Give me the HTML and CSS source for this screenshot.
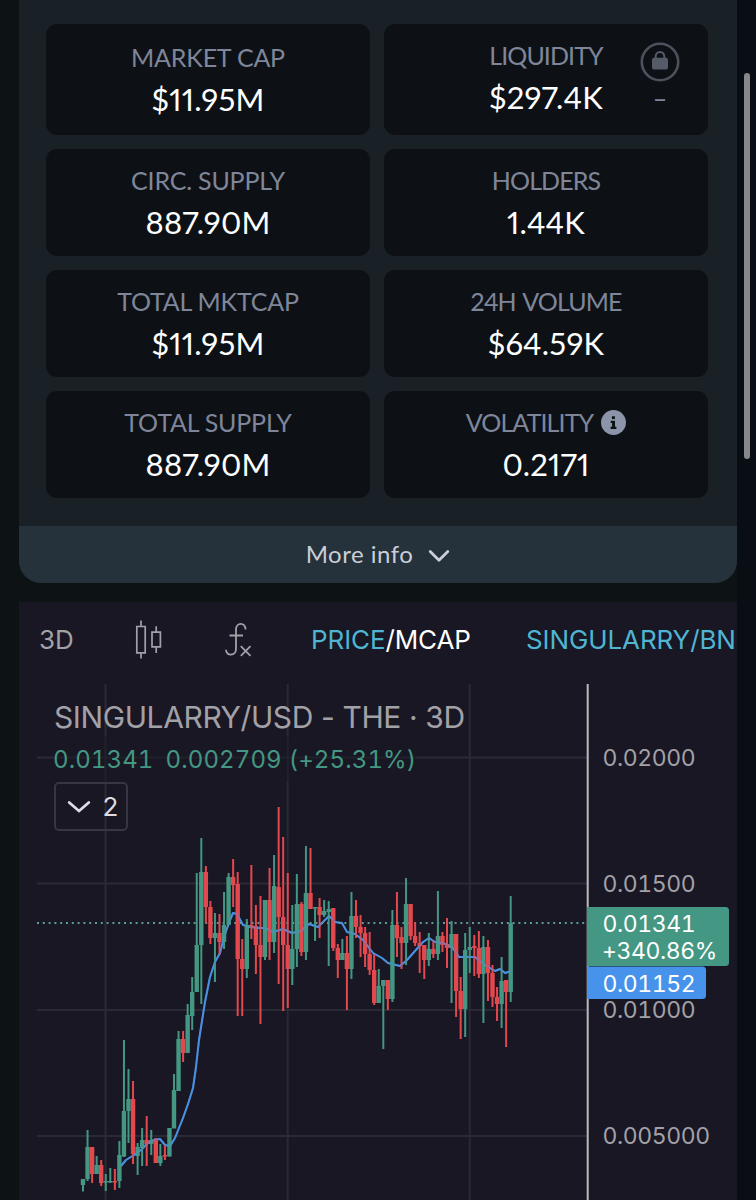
FILE: index.html
```html
<!DOCTYPE html>
<html lang="en">

<head>
    <meta charset="UTF-8">
    <meta name="viewport" content="width=device-width, initial-scale=1.0">
    <title>SINGULARRY/USD</title>

    <link rel="stylesheet" href="styles.css">
</head>

<body>

    <section class="info">
        <div class="stats">
            <div class="stat stat-first">
                <h5>MARKET CAP</h5>
                <p>$11.95M</p>
            </div>
            <div class="stat stat-first stat-liquidity">
                <h5>LIQUIDITY</h5>
                <p>$297.4K</p>
                <div class="lock">
                    <svg width="40" height="40" viewBox="0 0 40 40">
                        <circle cx="20" cy="20" r="18.2" fill="none" stroke="#4c525d" stroke-width="2.6"/>
                        <path d="M15.7 17v-2.700a4.300 4.300 0 0 1 8.600 0V17" fill="none" stroke="#555b68" stroke-width="2"/>
                        <rect x="12" y="15.700" width="16" height="11.800" rx="2" fill="#555b68"/>
                    </svg>
                    <span>–</span>
                </div>
            </div>
            <div class="stat">
                <h5>CIRC. SUPPLY</h5>
                <p>887.90M</p>
            </div>
            <div class="stat">
                <h5>HOLDERS</h5>
                <p>1.44K</p>
            </div>
            <div class="stat">
                <h5>TOTAL MKTCAP</h5>
                <p>$11.95M</p>
            </div>
            <div class="stat">
                <h5>24H VOLUME</h5>
                <p>$64.59K</p>
            </div>
            <div class="stat">
                <h5>TOTAL SUPPLY</h5>
                <p>887.90M</p>
            </div>
            <div class="stat">
                <h5>VOLATILITY
                    <svg width="25" height="25" viewBox="0 0 25 25">
                        <circle cx="12.500" cy="12.500" r="12.500" fill="#8c94a9"/>
                        <path d="M10.900 6.200h3v2.900h-3zM9.700 10.700h4.300v6h1.400v2.200H9.600v-2.200h1.500v-3.800H9.700z" fill="#0d1115"/>
                    </svg>
                </h5>
                <p>0.2171</p>
            </div>
        </div>
        <div class="more">
            <span>More info</span>
            <svg width="22" height="14" viewBox="0 0 22 14">
                <path d="M2.200 2.500L11 11.300l8.800-8.800" fill="none" stroke="#c9ced8" stroke-width="2.800" stroke-linecap="round" stroke-linejoin="round"/>
            </svg>
        </div>
    </section>

    <section class="chart">
        <div class="toolbar">
            <span class="interval">3D</span>
            <svg class="icon-candles" width="30" height="40" viewBox="0 0 30 40" fill="none" stroke="#a3a1a8" stroke-width="1.700">
                <path d="M2.800 6.500h8.400v26.300H2.800zM7 .5v6M7 32.800v5.700M18 12.200h8.400v14.600H18zM22.200 6.300v5.900M22.200 26.800v6.100"/>
            </svg>
            <svg class="icon-fx" width="28" height="36" viewBox="0 0 28 36" fill="none" stroke="#a3a1a8" stroke-width="1.800">
                <path d="M21.500 7.500C21.500 -.2 12 .2 12 7.500V27c0 7.300-10 7.500-10 .7M5.500 13.500h13.500M16.800 24.200l9.700 9.700M26.500 24.200l-9.700 9.700"/>
            </svg>
            <span class="switch"><b>PRICE</b>/MCAP</span>
            <span class="pair">SINGULARRY/BN</span>
        </div>

        <div class="plot">
            <svg id="grafico" width="718" height="516" viewBox="19 684 718 516">
                <g class="grid">
                    <path d="M37 757.500H587M37 883.500H587M37 1010H587M37 1136H587M105.500 684V1200M287.700 684V1200M469.700 684V1200"/>
                </g>
                <polyline class="average"/>
                <path class="last" d="M37 923H587"/>
                <g id="candles"></g>
                <polyline class="average over"/>
                <path class="axis" d="M587.700 684V1200"/>
                <g class="prices">
                    <text x="602.500" y="765.500">0.02000</text>
                    <text x="602.500" y="891.500">0.01500</text>
                    <text x="602.500" y="1018">0.01000</text>
                    <text x="602.500" y="1144">0.005000</text>
                </g>
                <path d="M587 907h138.500a3.500 3.500 0 0 1 3.500 3.500v52a3.500 3.500 0 0 1-3.500 3.500H587z" fill="#449782"/>
                <path d="M587 966.500h115.500a3.500 3.500 0 0 1 3.500 3.500v25.500a3.500 3.500 0 0 1-3.500 3.500H587z" fill="#4793ec"/>
                <g class="prices tags">
                    <text x="602.500" y="932">0.01341</text>
                    <text x="602" y="959">+340.86%</text>
                    <text x="602.500" y="991.500">0.01152</text>
                </g>
            </svg>

            <div class="legend">
                <h1>SINGULARRY/USD - THE · 3D</h1>
                <p><span>0.01341</span><span>0.002709</span><span>(+25.31%)</span></p>
                <div class="indicators">
                    <svg width="24" height="14" viewBox="0 0 24 14">
                        <path d="M2.200 2.500L12 11l9.800-8.500" fill="none" stroke="#dcdce2" stroke-width="2.800" stroke-linecap="round"/>
                    </svg>
                    2
                </div>
            </div>
        </div>
    </section>

    <div class="scroll"></div>

    <script src="chart.js"></script>

</body>

</html>
```

FILE: styles.css
```css
* {
    padding: 0;
    margin: 0;
    box-sizing: border-box;
}

body {
    background: linear-gradient(to right, #0d1215 737px, #090d14 737px);
    width: 756px;
    height: 1200px;
    overflow: hidden;
    font-family: Lato, sans-serif;
}

.info {
    width: 718px;
    height: 583px;
    margin-left: 19px;
    background-color: #192127;
    border-radius: 0 0 22px 22px;
    overflow: hidden;
    display: flex;
    flex-direction: column;
}

.stats {
    height: 526px;
    padding: 24px 29px 0 27px;
    display: grid;
    grid-template-columns: 1fr 1fr;
    grid-template-rows: 111px 107px 107px 107px;
    gap: 14px;
}

.stat {
    position: relative;
    background-color: #0d1115;
    border-radius: 11px;
    padding-top: 13px;
    display: flex;
    flex-direction: column;
    align-items: center;
}

.stat-first {
    padding-top: 15px;
}

.stat h5 {
    height: 36px;
    display: flex;
    align-items: center;
    gap: 8px;
    color: #7f869a;
    font-size: 25px;
    font-weight: normal;
    letter-spacing: -0.2px;
}

.stat:nth-child(even) h5 {
    letter-spacing: -0.9px;
    word-spacing: 2px;
}

.stat p {
    line-height: 48px;
    color: #fff;
    font-size: 31px;
    letter-spacing: 0.2px;
    font-variant-numeric: proportional-nums;
}

.stat-liquidity {
    padding-top: 13px;
}

.lock {
    position: absolute;
    top: 18px;
    right: 28px;
    width: 40px;
    display: flex;
    flex-direction: column;
    align-items: center;
    color: #7f869a;
    font-size: 25px;
    line-height: 32px;
}

.more {
    height: 57px;
    padding-bottom: 2px;
    background-color: #25313b;
    display: flex;
    align-items: center;
    justify-content: center;
    gap: 15px;
    color: #c9ced8;
    font-size: 24px;
    letter-spacing: 0.5px;
}

.more svg {
    margin-top: 4px;
}

.chart {
    width: 718px;
    height: 598px;
    margin: 19px 0 0 19px;
    background-color: #181723;
    overflow: hidden;
    font-family: Inter, sans-serif;
}

.toolbar {
    height: 82px;
    padding: 0 0 7px 20px;
    display: flex;
    align-items: center;
    color: #fff;
    font-size: 26px;
    white-space: nowrap;
}

.toolbar > * {
    flex-shrink: 0;
}

.interval {
    width: 95px;
    color: #a3a1a8;
}

.icon-candles {
    margin-right: 60px;
}

.icon-fx {
    margin-right: 59px;
}

.switch {
    width: 215px;
    letter-spacing: -0.1px;
}

.switch b {
    color: #4fb5d3;
    font-weight: normal;
}

.pair {
    color: #4fb5d3;
    letter-spacing: -0.1px;
}

.plot {
    position: relative;
}

.plot > svg {
    display: block;
}

.grid path {
    stroke: #2a2a35;
    stroke-width: 2;
}

.axis {
    stroke: #b9b9be;
    stroke-width: 2;
}

.average {
    fill: none;
    stroke: #4a90e2;
    stroke-width: 2;
    stroke-linejoin: round;
}

.over {
    opacity: 0.4;
}

.last {
    stroke: #5d9d90;
    stroke-width: 2;
    stroke-dasharray: 2 3.8;
}

.up {
    fill: #449782;
}

.down {
    fill: #e4484f;
}

.prices {
    fill: #a3a1a8;
    font-size: 23px;
    letter-spacing: -0.4px;
    font-variant-numeric: tabular-nums;
}

.tags {
    fill: #fff;
}

.legend {
    position: absolute;
    top: 14px;
    left: 34px;
    color: #a3a1a8;
}

.legend h1 {
    margin-left: 1px;
    line-height: 38px;
    font-size: 30px;
    font-weight: normal;
    letter-spacing: -0.4px;
}

.legend p {
    display: flex;
    gap: 12px;
    width: max-content;
    height: 46px;
    line-height: 48px;
    color: #449782;
    font-size: 24px;
    letter-spacing: 0.1px;
    font-variant-numeric: tabular-nums;
    background-color: rgba(24, 23, 35, 0.5);
}

.legend p span:last-child {
    margin-left: -5px;
}

.indicators {
    width: 74px;
    height: 49px;
    margin-left: 1px;
    padding-left: 3px;
    border: 2px solid #373642;
    border-radius: 5px;
    display: flex;
    align-items: center;
    justify-content: center;
    gap: 12px;
    color: #dcdce2;
    font-size: 26px;
}

.scroll {
    position: absolute;
    top: 73px;
    left: 744px;
    width: 6px;
    height: 386px;
    border-radius: 3px;
    background-color: #87888a;
}
```

FILE: chart.js
```js
// [up, high, low, body top, body bottom]
var candles = [
    [1, 1179, 1191.5, 1179, 1185], [1, 1130, 1181, 1147, 1179], [0, 1147, 1183, 1147, 1174],
    [1, 1156, 1174, 1165, 1174], [0, 1160, 1186, 1165, 1183], [1, 1174, 1191, 1181, 1182.5],
    [1, 1168, 1183, 1181, 1182.5], [0, 1169, 1190, 1181, 1182.5], [1, 1141, 1188, 1155, 1181],
    [1, 1040, 1157, 1111, 1156.5], [1, 1069, 1143, 1099, 1111], [0, 1081, 1164, 1099, 1154],
    [1, 1143, 1175, 1147, 1156], [1, 1128, 1166, 1140, 1148], [0, 1116, 1166, 1140, 1144],
    [1, 1130, 1155, 1140, 1144], [0, 1138, 1163, 1139, 1163], [1, 1144, 1166, 1156, 1163],
    [0, 1145, 1160, 1155, 1156.5], [1, 1128, 1156.5, 1128, 1156.5], [1, 1074, 1128, 1090, 1128.5],
    [1, 1031, 1091, 1039, 1091], [0, 1031, 1062, 1039, 1053], [1, 1004, 1053, 1015, 1053],
    [1, 977, 1030, 992, 1016], [1, 873, 992, 945, 992], [1, 838, 1004, 872, 945],
    [0, 866, 923, 872, 907], [0, 901, 944, 907, 938], [1, 913, 982, 933, 938],
    [0, 914, 955, 933, 942], [1, 892, 949, 925, 942], [1, 873, 925, 877, 925],
    [0, 859, 907, 877, 885], [0, 872, 1016, 884, 959], [0, 939, 1016, 959, 969],
    [1, 919, 978, 925, 969], [0, 865, 939, 925, 928], [0, 905, 974, 926, 945],
    [0, 896, 1024, 945, 957], [1, 900, 960, 900, 957], [0, 868, 960, 900, 942],
    [1, 855, 953, 886, 942], [0, 807, 984, 887, 917], [0, 837, 1011, 917, 945],
    [0, 873, 1008, 945, 969], [1, 905, 985, 949, 969], [1, 874, 967, 904, 949],
    [0, 902, 956, 904, 952], [1, 846, 960, 893, 952], [0, 848, 909, 893, 909],
    [1, 907, 941, 907, 908.5], [0, 898, 938, 907, 915], [1, 900, 917, 911, 915],
    [1, 901, 966, 909, 912], [0, 908, 951, 908, 948], [0, 944, 978, 948, 960],
    [1, 939, 960, 953, 960], [0, 936, 1010, 953, 969], [1, 892, 979, 916, 969],
    [0, 900, 938, 916, 927], [0, 915, 957, 927, 933], [0, 927, 967, 933, 954],
    [0, 932, 975, 954, 970], [0, 954, 1005, 970, 1003], [1, 969, 1003, 986, 1003],
    [1, 980, 1049, 980, 986], [0, 980, 1010, 980, 999], [1, 910, 1002, 925, 999],
    [0, 892, 957, 925, 938], [0, 927, 969, 937, 943], [1, 878, 965, 904, 943],
    [0, 904, 940, 904, 936], [0, 922, 946, 936, 943], [0, 932, 973, 943, 946],
    [0, 945, 979, 945, 960], [1, 933, 966, 949, 960], [0, 940, 958, 949, 954],
    [1, 891, 960, 936, 954], [0, 932, 952, 936, 945], [0, 918, 968, 944, 948],
    [1, 921, 1003, 934, 948], [0, 934, 1017, 934, 991], [0, 977, 1039, 991, 1009],
    [1, 933, 1037, 950, 1009], [1, 927, 973, 947, 950], [0, 935, 976, 946, 948],
    [0, 931, 978, 948, 974], [1, 936, 1023, 947, 974], [0, 940, 1001, 947, 973],
    [0, 965, 1007, 973, 997], [0, 987, 1021, 997, 1004], [1, 957, 1028, 981, 1004],
    [0, 980, 1047, 980, 992], [1, 896, 1002, 923, 992]
];

var average = '121,1166 126,1160 134,1155 141,1150 148,1143 155,1139.5 160,1139 165,1145 170,1146 175,1138 ' +
    '183,1118 188,1104 193,1088 196,1067 199,1040 205,1002 210,977 215,962 220,953 224,937 230,920 233,913 ' +
    '237,914 243,925 251,927 258,928 265,928 273,932 283,929 292,933 301,931 309,924 318,927 329,916 335,922 ' +
    '342,923 347,932 355,934 363,940 373,953 382,958 388,963 400,966 407,960 423,942 429,938 435,942 443,943 ' +
    '452,947 459,957 475,957 485,965 495,971 500,969 505,973 511,971';

var ns = 'http://www.w3.org/2000/svg';
var group = document.getElementById('candles');

function bar(x, y, width, height, name){
    var rect = document.createElementNS(ns, 'rect');
    rect.setAttribute('x', x);
    rect.setAttribute('y', y);
    rect.setAttribute('width', width);
    rect.setAttribute('height', height);
    rect.setAttribute('class', name);
    group.appendChild(rect);
}

for(var i = 0; i < candles.length; i++){
    var c = candles[i];
    var x = 83 + i * 4.55;
    var name = c[0] ? 'up' : 'down';
    bar(x - 1, c[1], 2, c[2] - c[1], name);
    bar(x - 2.2, c[3], 4.4, c[4] - c[3], name);
}

var lines = document.getElementsByClassName('average');
for(var j = 0; j < lines.length; j++){
    lines[j].setAttribute('points', average);
}
```
